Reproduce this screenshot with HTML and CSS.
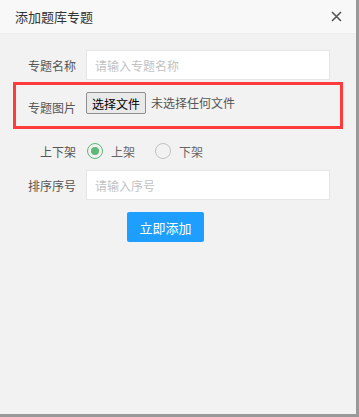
FILE: index.html
```html
<!DOCTYPE html>
<html lang="zh-CN">
<head>
    <meta charset="UTF-8">
    <meta name="viewport" content="width=device-width, initial-scale=1.0">
    <title>添加题库专题</title>
    <link rel="stylesheet" href="styles.css">
</head>
<body>

    <div class="dialog">
        <div class="dialog-header">
            <span class="dialog-title">添加题库专题</span>
            <svg class="dialog-close" width="11" height="11" viewBox="0 0 11 11">
                <path d="M1 1 L10 10 M10 1 L1 10" stroke="#555" stroke-width="1.6" fill="none"/>
            </svg>
        </div>

        <div class="dialog-body">
            <div class="form-row">
                <label class="form-label">专题名称</label>
                <input class="form-input" type="text" placeholder="请输入专题名称">
            </div>

            <div class="form-row highlight">
                <label class="form-label label-low">专题图片</label>
                <button class="file-btn">选择文件</button>
                <span class="file-name">未选择任何文件</span>
            </div>

            <div class="form-row radio-row">
                <label class="form-label">上下架</label>
                <span class="radio checked"><i></i>上架</span>
                <span class="radio"><i></i>下架</span>
            </div>

            <div class="form-row">
                <label class="form-label">排序序号</label>
                <input class="form-input" type="text" placeholder="请输入序号">
            </div>

            <button class="submit-btn">立即添加</button>
        </div>
    </div>

</body>
</html>
```

FILE: styles.css
```css
body {
    margin: 0;
    background: #999;
    font-family: "Noto Sans CJK SC", "Liberation Sans", sans-serif;
    width: 359px;
    height: 417px;
    overflow: hidden;
}
.dialog {
    width: 356px;
    height: 414px;
    background: #f2f2f2;
}
.dialog-header {
    height: 33px;
    background: #f8f8f8;
    border-bottom: 1px solid #eee;
    display: flex;
    align-items: center;
    justify-content: space-between;
    padding: 0 15px;
}
.dialog-title {
    font-size: 13px;
    color: #333;
}
.dialog-close {
    margin-right: -1px;
}
.dialog-body {
    padding: 16px 0 0 13px;
}
.form-row {
    display: flex;
    align-items: center;
}
.form-label {
    width: 63px;
    margin-right: 10px;
    text-align: right;
    font-size: 12px;
    color: #555;
    flex-shrink: 0;
}
.form-input {
    width: 244px;
    height: 30px;
    box-sizing: border-box;
    border: 1px solid #e6e6e6;
    background: #fff;
    padding: 0 8px;
    font-family: inherit;
    font-size: 12px;
    outline: none;
}
.form-input::placeholder {
    color: #c2c2c2;
}
.highlight {
    margin-top: 2px;
    width: 330px;
    height: 47px;
    box-sizing: border-box;
    border: 3px solid #ff3b3b;
    align-items: flex-start;
    padding-top: 7px;
}
.highlight .form-label {
    width: 60px;
    padding-top: 7px;
}
.file-btn {
    height: 22px;
    padding: 0 5px;
    border: 1px solid #8f8f8f;
    border-radius: 2px;
    background: #e9e9e9;
    font-family: inherit;
    font-size: 12px;
    color: #000;
}
.file-name {
    margin-left: 5px;
    font-size: 12px;
    color: #555;
    line-height: 22px;
}
.radio-row {
    margin-top: 7px;
    height: 30px;
}
.radio {
    display: flex;
    align-items: center;
    font-size: 12px;
    color: #666;
    margin-right: 19px;
}
.radio i {
    width: 16px;
    height: 16px;
    box-sizing: border-box;
    border: 1px solid #c2c2c2;
    border-radius: 50%;
    margin: 0 8px 0 1px;
    position: relative;
}
.radio.checked i {
    border-color: #5fb878;
}
.radio.checked i::after {
    content: "";
    position: absolute;
    left: 3px;
    top: 3px;
    width: 8px;
    height: 8px;
    border-radius: 50%;
    background: #5fb878;
}
.radio-row + .form-row {
    margin-top: 4px;
}
.submit-btn {
    display: block;
    margin: 12px 0 0 114px;
    width: 77px;
    height: 30px;
    border: none;
    border-radius: 2px;
    background: #1e9fff;
    color: #fff;
    font-family: inherit;
    font-size: 13px;
}
```
